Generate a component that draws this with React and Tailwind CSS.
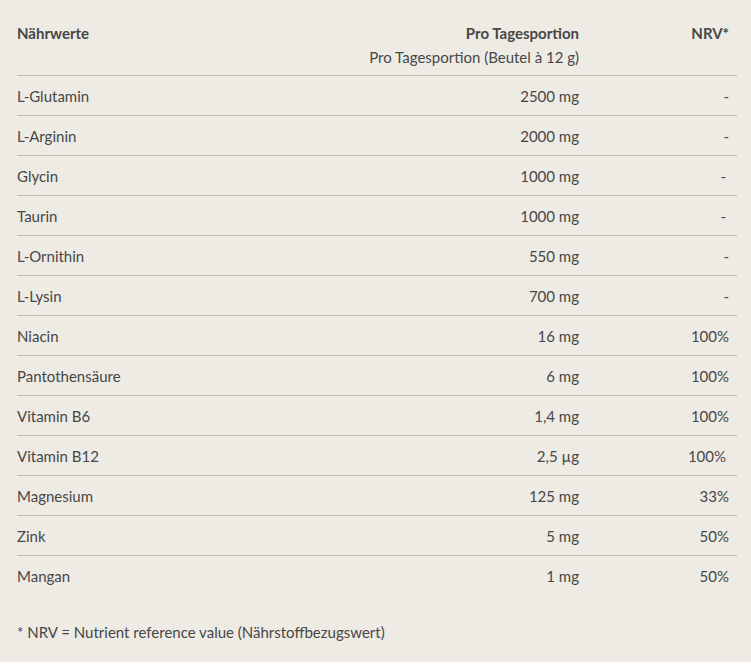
import React from "react";

const rows = [
  ["L-Glutamin", "2500 mg", "-", false],
  ["L-Arginin", "2000 mg", "-", false],
  ["Glycin", "1000 mg", "-", true],
  ["Taurin", "1000 mg", "-", true],
  ["L-Ornithin", "550 mg", "-", false],
  ["L-Lysin", "700 mg", "-", false],
  ["Niacin", "16 mg", "100%", false],
  ["Pantothensäure", "6 mg", "100%", false],
  ["Vitamin B6", "1,4 mg", "100%", false],
  ["Vitamin B12", "2,5 µg", "100%", true],
  ["Magnesium", "125 mg", "33%", false],
  ["Zink", "5 mg", "50%", false],
  ["Mangan", "1 mg", "50%", false],
];

export default function App() {
  return (
    <div className="bg-white">
      <div
        className="h-[662px] bg-[#eeebe5] px-[17px] pt-[21px] text-[15px] text-[#474747]"
        style={{ fontFamily: "Lato, 'Open Sans', sans-serif" }}
      >
        <div className="w-[720px]">
          <div className="grid grid-cols-[minmax(0,1fr)_220px_150px] border-b border-[#bcb9b5] pb-[6px] leading-[24px]">
            <div className="font-bold">Nährwerte</div>
            <div className="pr-2 text-right">
              <div className="font-bold">Pro Tagesportion</div>
              <div className="whitespace-nowrap">Pro Tagesportion (Beutel à 12 g)</div>
            </div>
            <div className="pr-2 text-right font-bold">NRV*</div>
          </div>
          {rows.map(([name, amount, nrv, shift], i) => (
            <div
              key={name}
              className={
                "grid h-[40px] grid-cols-[minmax(0,1fr)_220px_150px] items-center leading-[24px] " +
                (i < rows.length - 1 ? "border-b border-[#bcb9b5]" : "")
              }
            >
              <div>{name}</div>
              <div className="pr-2 text-right">{amount}</div>
              <div className={shift ? "pr-[11px] text-right" : "pr-2 text-right"}>{nrv}</div>
            </div>
          ))}
          <div className="mt-[24px] leading-[24px]">* NRV = Nutrient reference value (Nährstoffbezugswert)</div>
        </div>
      </div>
    </div>
  );
}
